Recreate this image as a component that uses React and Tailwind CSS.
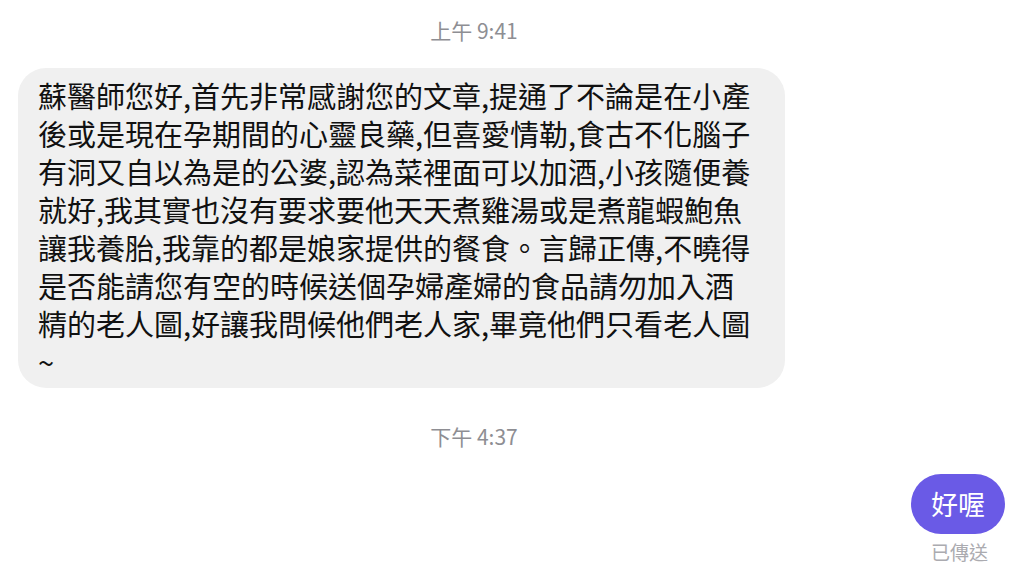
const lines = [
  '蘇醫師您好,首先非常感謝您的文章,提通了不論是在小產',
  '後或是現在孕期間的心靈良藥,但喜愛情勒,食古不化腦子',
  '有洞又自以為是的公婆,認為菜裡面可以加酒,小孩隨便養',
  '就好,我其實也沒有要求要他天天煮雞湯或是煮龍蝦鮑魚',
  '讓我養胎,我靠的都是娘家提供的餐食。言歸正傳,不曉得',
  '是否能請您有空的時候送個孕婦產婦的食品請勿加入酒',
  '精的老人圖,好讓我問候他們老人家,畢竟他們只看老人圖',
  '~',
]

const Timestamp = ({ children }) => (
  <div className="flex w-[948px] justify-center text-[21px] leading-[24px] text-[#8e8e93]">
    {children}
  </div>
)

export default function App() {
  return (
    <div
      className="flex h-[586px] w-[1024px] flex-col overflow-hidden bg-white"
      style={{ fontFamily: '"Noto Sans CJK TC", "Noto Sans", sans-serif' }}
    >
      <div className="pt-[18px]">
        <Timestamp>上午 9:41</Timestamp>
      </div>

      <div className="mt-[26px] pl-[18px]">
        <div className="w-[767px] rounded-[28px] bg-[#f0f0f0] pb-[8px] pl-[20px] pt-[8px] text-[29px] leading-[38px] text-[#111111]">
          {lines.map((line, i) => (
            <div key={i} className="whitespace-nowrap">
              {line}
            </div>
          ))}
        </div>
      </div>

      <div className="mt-[36px]">
        <Timestamp>下午 4:37</Timestamp>
      </div>

      <div className="mt-[26px] flex flex-col items-end pr-[19px]">
        <div className="flex h-[60px] items-center rounded-full bg-[#6a5ae6] px-[20px] text-[27px] text-white">
          好喔
        </div>
        <div className="mr-[17px] mt-[7px] text-[19px] leading-[22px] text-[#ababb0]">已傳送</div>
      </div>
    </div>
  )
}
